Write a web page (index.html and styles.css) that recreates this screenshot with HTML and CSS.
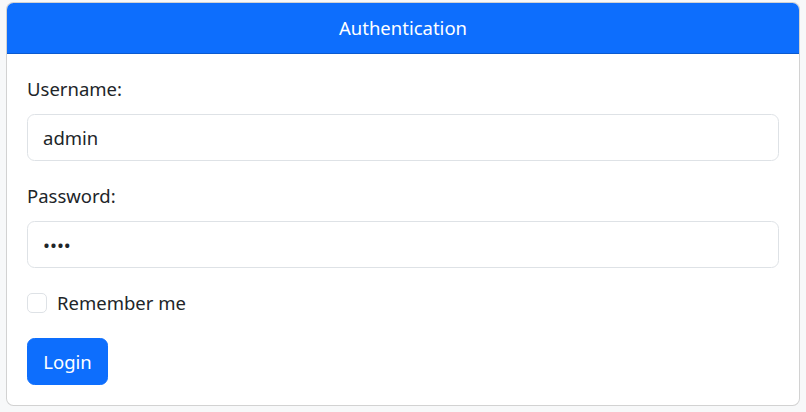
FILE: index.html
```html
<!DOCTYPE html>
<html lang="en">
<head>
<meta charset="utf-8">
<title>Authentication</title>
<link rel="stylesheet" href="styles.css">
</head>
<body>
<div class="card">
  <div class="card-header">Authentication</div>
  <form class="card-body">
    <div class="field">
      <label class="form-label" for="username">Username:</label>
      <input class="form-control" id="username" type="text" value="admin">
    </div>
    <div class="field">
      <label class="form-label" for="password">Password:</label>
      <input class="form-control" id="password" type="password" value="1234">
    </div>
    <div class="field form-check">
      <input class="form-check-input" id="remember" type="checkbox">
      <label class="form-check-label" for="remember">Remember me</label>
    </div>
    <button class="btn" type="button">Login</button>
  </form>
</div>
</body>
</html>
```

FILE: styles.css
```css
* { box-sizing: border-box; }
html, body { margin: 0; }
body {
  background: #f7f8f9;
  padding: 2px 6px 6px 6px;
  font-family: "Noto Sans", "Open Sans", sans-serif;
  font-size: 18.5px;
  line-height: 30px;
  color: #212529;
}
.card {
  background: #fff;
  border: 1px solid rgba(0,0,0,.175);
  border-radius: 7.5px;
  overflow: hidden;
}
.card-header {
  background: #0d6efd;
  color: #fff;
  text-align: center;
  padding: 10px 20px;
  border-bottom: 1px solid rgba(0,0,0,.175);
}
.card-body {
  padding: 20px;
  margin: 0;
  display: flex;
  flex-direction: column;
  align-items: flex-start;
}
.field {
  width: 100%;
  margin-bottom: 20px;
}
.form-label {
  display: block;
  margin-bottom: 10px;
}
.form-control {
  display: block;
  width: 100%;
  height: 47px;
  padding: 7.5px 15px;
  font: inherit;
  color: #212529;
  background: #fff;
  border: 1px solid #dee2e6;
  border-radius: 7.5px;
  outline: none;
}
.form-check {
  display: flex;
  align-items: flex-start;
  min-height: 30px;
}
.form-check-input {
  appearance: none;
  -webkit-appearance: none;
  width: 20px;
  height: 20px;
  margin: 5px 10px 0 0;
  border: 1px solid #dee2e6;
  border-radius: 5px;
  background: #fff;
  flex: none;
}
.form-check-label { display: block; }
.btn {
  font: inherit;
  color: #fff;
  background: #0d6efd;
  border: 1px solid #0d6efd;
  border-radius: 7.5px;
  padding: 7.5px 15px;
  line-height: 30px;
  width: 81px;
}
```
